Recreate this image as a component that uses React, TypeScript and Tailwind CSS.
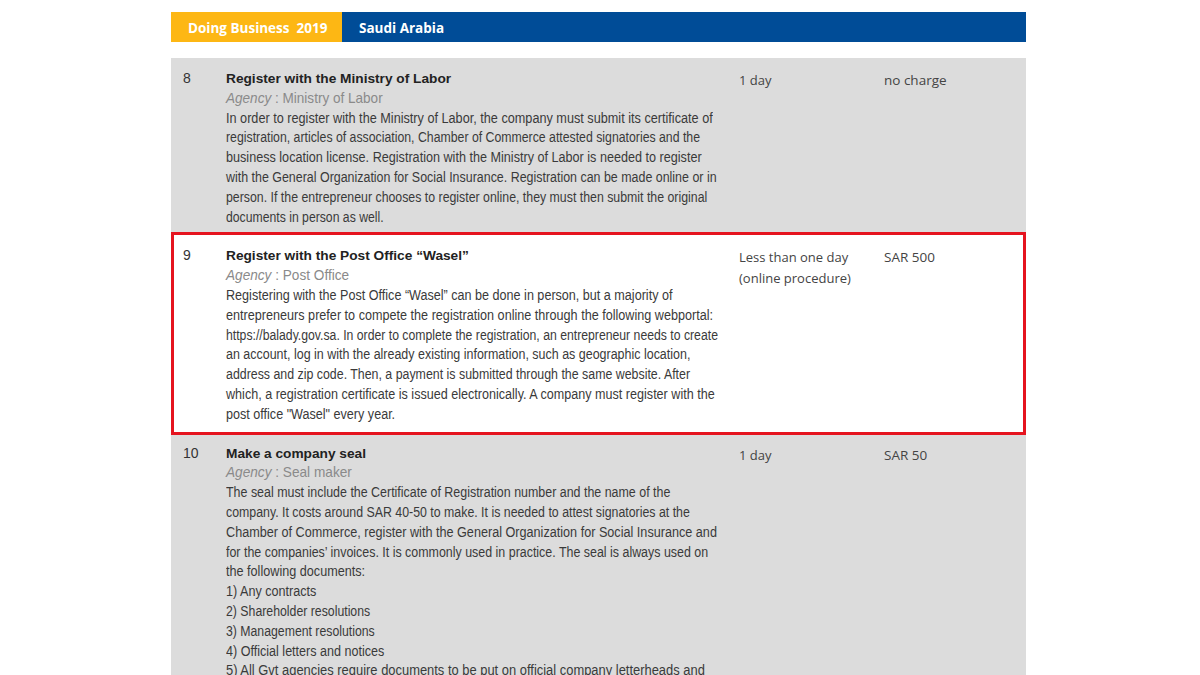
import React, { useLayoutEffect, useRef, useState } from "react";

const arial = { fontFamily: '"Liberation Sans", Arial, sans-serif' };
const humanist = { fontFamily: '"Open Sans", "DejaVu Sans", sans-serif' };

const LEFT = 226;

function Line({ text, end, children }: { text?: string; end: number | null; children?: React.ReactNode }) {
  const ref = useRef<HTMLSpanElement>(null);
  const [s, setS] = useState(0.905);
  useLayoutEffect(() => {
    if (end && ref.current) {
      const w = ref.current.offsetWidth;
      if (w > 0) setS((end - LEFT) / w);
    }
  }, [end]);
  return (
    <div className="h-[19.8px] whitespace-nowrap">
      <span ref={ref} className="inline-block origin-left" style={{ transform: `scaleX(${s})` }}>
        {children ?? text}
      </span>
    </div>
  );
}

type Row = {
  n: string;
  title: string;
  agency: string;
  agencyEnd: number;
  body: [string, number | null][];
  time: string[];
  cost: string;
  cls: string;
  highlight?: boolean;
};

const rows: Row[] = [
  {
    n: "8",
    title: "Register with the Ministry of Labor",
    agency: "Ministry of Labor",
    agencyEnd: 383,
    body: [
      ["In order to register with the Ministry of Labor, the company must submit its certificate of", 713],
      ["registration, articles of association, Chamber of Commerce attested signatories and the", 700],
      ["business location license. Registration with the Ministry of Labor is needed to register", 702],
      ["with the General Organization for Social Insurance. Registration can be made online or in", 717],
      ["person. If the entrepreneur chooses to register online, they must then submit the original", 707],
      ["documents in person as well.", 384],
    ],
    time: ["1 day"],
    cost: "no charge",
    cls: "flex bg-[#dcdcdc] pt-[11px] pb-[5px]",
  },
  {
    n: "9",
    title: "Register with the Post Office \u201cWasel\u201d",
    agency: "Post Office",
    agencyEnd: 349,
    body: [
      ["Registering with the Post Office \u201cWasel\u201d can be done in person, but a majority of", 672],
      ["entrepreneurs prefer to compete the registration online through the following webportal:", 713],
      ["https://balady.gov.sa. In order to complete the registration, an entrepreneur needs to create", 718],
      ["an account, log in with the already existing information, such as geographic location,", 690],
      ["address and zip code. Then, a payment is submitted through the same website. After", 690],
      ["which, a registration certificate is issued electronically. A company must register with the", 715],
      ["post office \"Wasel\" every year.", 395],
    ],
    time: ["Less than one day", "(online procedure)"],
    cost: "SAR 500",
    cls: "flex bg-white border-[3px] border-[#e5141f] pt-[11px] pb-[7px]",
    highlight: true,
  },
  {
    n: "10",
    title: "Make a company seal",
    agency: "Seal maker",
    agencyEnd: 352,
    body: [
      ["The seal must include the Certificate of Registration number and the name of the", 670],
      ["company. It costs around SAR 40-50 to make. It is needed to attest signatories at the", 690],
      ["Chamber of Commerce, register with the General Organization for Social Insurance and", 717],
      ["for the companies\u2019 invoices. It is commonly used in practice. The seal is always used on", 708],
      ["the following documents:", 365],
      ["1) Any contracts", 316],
      ["2) Shareholder resolutions", 370],
      ["3) Management resolutions", 375],
      ["4) Official letters and notices", 384],
      ["5) All Gvt agencies require documents to be put on official company letterheads and", 705],
      ["stamped with the company seal.", null],
    ],
    time: ["1 day"],
    cost: "SAR 50",
    cls: "flex bg-[#dcdcdc] pt-[9px] pb-[6px]",
  },
];

function RowView({ r }: { r: Row }) {
  return (
    <div className={r.cls}>
      <div className={r.highlight ? "w-[52px] pl-[9px]" : "w-[55px] pl-[12px]"}>
        <div className="text-[14px] leading-[19.8px] text-[#333]" style={arial}>
          {r.n}
        </div>
      </div>
      <div className="w-[513px] pr-[18px]">
        <div
          className="text-[13.7px] leading-[19.8px] font-bold text-[#222] whitespace-nowrap"
          style={arial}
        >
          {r.title}
        </div>
        <div className="text-[14.5px] leading-[19.8px] text-[#8a8a8a]" style={arial}>
          <Line end={r.agencyEnd}>
            <span className="italic">Agency</span> : {r.agency}
          </Line>
        </div>
        <div className="text-[14px] leading-[19.8px] text-[#3a3a3a]" style={arial}>
          {r.body.map(([b, e], i) => (
            <Line key={i} text={b} end={e} />
          ))}
        </div>
      </div>
      <div className="w-[145px] pt-[1px] text-[13px] leading-[21px] text-[#444]" style={humanist}>
        {r.time.map((t, i) => (
          <div key={i}>{t}</div>
        ))}
      </div>
      <div className="flex-1 pt-[1px] text-[13.5px] leading-[21px] text-[#444]" style={humanist}>
        {r.cost}
      </div>
    </div>
  );
}

export default function App() {
  return (
    <div className="w-[1200px] h-[675px] overflow-hidden bg-white">
      <div className="ml-[171px] w-[855px] pt-[12px]">
        <div className="flex h-[30px] text-white font-bold text-[13.5px]" style={humanist}>
          <div className="w-[171px] bg-[#fdb714] flex items-center pl-[17px] pt-[3px]">
            Doing Business&nbsp;&nbsp;2019
          </div>
          <div className="flex-1 bg-[#004c97] flex items-center pl-[17px] pt-[3px]">Saudi Arabia</div>
        </div>
        <div className="mt-[16px] flex flex-col">
          {rows.map((r) => (
            <RowView key={r.n} r={r} />
          ))}
        </div>
      </div>
    </div>
  );
}
